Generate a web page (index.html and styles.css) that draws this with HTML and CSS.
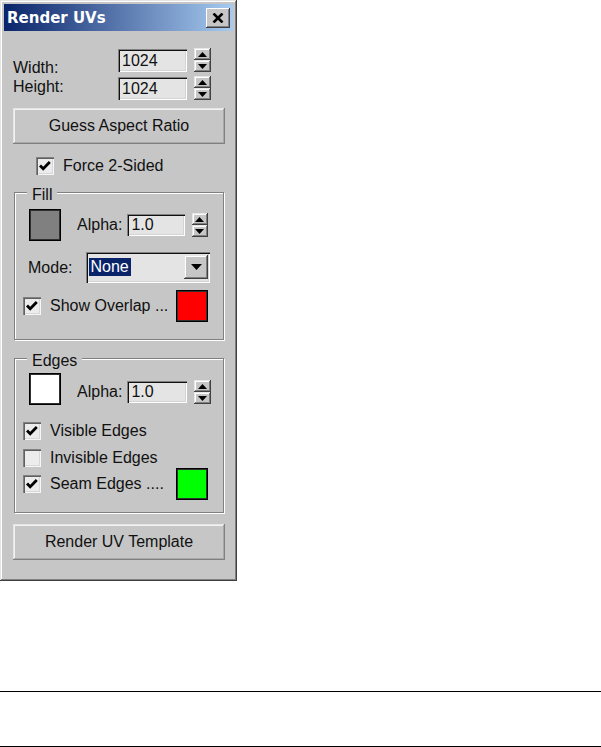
FILE: index.html
```html
<!DOCTYPE html>
<html>
<head>
<meta charset="utf-8">
<title>Render UVs</title>
<link rel="stylesheet" href="styles.css">
</head>
<body>
<div class="window">
  <div class="titlebar">
    <span class="title">Render UVs</span>
    <span class="close"><svg width="12" height="10" viewBox="0 0 12 10"><path d="M1.5 0.5 L10.5 9.5 M10.5 0.5 L1.5 9.5" stroke="#000" stroke-width="2.6"/></svg></span>
  </div>
  <div class="content">
    <div class="size">
      <div class="size-labels"><span>Width:</span><span>Height:</span></div>
      <div class="size-fields">
        <div class="spin-row">
          <div class="field field-size">1024</div>
          <div class="spinner">
            <span class="spin-btn"><svg width="9" height="5" viewBox="0 0 9 5"><polygon points="0,5 4.5,0 9,5" fill="#000"/></svg></span>
            <span class="spin-btn"><svg width="9" height="5" viewBox="0 0 9 5"><polygon points="0,0 9,0 4.5,5" fill="#000"/></svg></span>
          </div>
        </div>
        <div class="spin-row">
          <div class="field field-size">1024</div>
          <div class="spinner">
            <span class="spin-btn"><svg width="9" height="5" viewBox="0 0 9 5"><polygon points="0,5 4.5,0 9,5" fill="#000"/></svg></span>
            <span class="spin-btn"><svg width="9" height="5" viewBox="0 0 9 5"><polygon points="0,0 9,0 4.5,5" fill="#000"/></svg></span>
          </div>
        </div>
      </div>
    </div>

    <div class="btn btn-guess">Guess Aspect Ratio</div>

    <div class="check force">
      <span class="cb"><svg width="18" height="18" viewBox="0 0 18 18"><path d="M4 8.5 L7.2 11.8 L13.8 5" fill="none" stroke="#000" stroke-width="2.8"/></svg></span>
      <span>Force 2-Sided</span>
    </div>

    <div class="group group-fill">
      <span class="legend">Fill</span>
      <div class="alpha-row">
        <span class="swatch swatch-gray"></span>
        <span class="alpha-label">Alpha:</span>
        <div class="field field-alpha">1.0</div>
        <div class="spinner">
          <span class="spin-btn"><svg width="9" height="5" viewBox="0 0 9 5"><polygon points="0,5 4.5,0 9,5" fill="#000"/></svg></span>
          <span class="spin-btn"><svg width="9" height="5" viewBox="0 0 9 5"><polygon points="0,0 9,0 4.5,5" fill="#000"/></svg></span>
        </div>
      </div>
      <div class="mode-row">
        <span>Mode:</span>
        <div class="select">
          <span class="sel-text">None</span>
          <span class="sel-btn"><svg width="11" height="6" viewBox="0 0 11 6"><polygon points="0,0 11,0 5.5,6" fill="#000"/></svg></span>
        </div>
      </div>
      <div class="swatch-check-row overlap-row">
        <div class="check">
          <span class="cb"><svg width="18" height="18" viewBox="0 0 18 18"><path d="M4 8.5 L7.2 11.8 L13.8 5" fill="none" stroke="#000" stroke-width="2.8"/></svg></span>
          <span>Show Overlap ...</span>
        </div>
        <span class="swatch swatch-red"></span>
      </div>
    </div>

    <div class="group group-edges">
      <span class="legend">Edges</span>
      <div class="alpha-row">
        <span class="swatch swatch-white"></span>
        <div class="alpha-low">
          <span class="alpha-label">Alpha:</span>
          <div class="field field-alpha">1.0</div>
          <div class="spinner">
            <span class="spin-btn"><svg width="9" height="5" viewBox="0 0 9 5"><polygon points="0,5 4.5,0 9,5" fill="#000"/></svg></span>
            <span class="spin-btn"><svg width="9" height="5" viewBox="0 0 9 5"><polygon points="0,0 9,0 4.5,5" fill="#000"/></svg></span>
          </div>
        </div>
      </div>
      <div class="edge-checks">
        <div class="check">
          <span class="cb"><svg width="18" height="18" viewBox="0 0 18 18"><path d="M4 8.5 L7.2 11.8 L13.8 5" fill="none" stroke="#000" stroke-width="2.8"/></svg></span>
          <span>Visible Edges</span>
        </div>
        <div class="check">
          <span class="cb"></span>
          <span>Invisible Edges</span>
        </div>
        <div class="swatch-check-row seam-row">
          <div class="check">
            <span class="cb"><svg width="18" height="18" viewBox="0 0 18 18"><path d="M4 8.5 L7.2 11.8 L13.8 5" fill="none" stroke="#000" stroke-width="2.8"/></svg></span>
            <span>Seam Edges ....</span>
          </div>
          <span class="swatch swatch-green"></span>
        </div>
      </div>
    </div>

    <div class="btn btn-render">Render UV Template</div>
  </div>
</div>
<div class="rules"></div>
</body>
</html>
```

FILE: styles.css
```css
* { box-sizing: border-box; }
html, body { margin: 0; padding: 0; background: #fff; }
body {
  font-family: "Liberation Sans", Arial, sans-serif;
  font-size: 16px;
  color: #111;
}

.window {
  width: 237px;
  height: 581px;
  background: #c6c6c6;
  padding: 4px;
  box-shadow: inset -1px -1px 0 #404040, inset 1px 1px 0 #e4e4e4,
              inset -2px -2px 0 #808080, inset 2px 2px 0 #fff;
  display: flex;
  flex-direction: column;
}

.titlebar {
  height: 27px;
  display: flex;
  align-items: center;
  padding-left: 3px;
  padding-top: 1px;
  background: linear-gradient(to right, #0a246a, #a6caf0);
}
.title {
  font-family: "DejaVu Sans", Verdana, sans-serif;
  font-weight: bold;
  font-size: 15px;
  color: #fff;
}
.close {
  margin-left: auto;
  margin-right: 3px;
  width: 24px;
  height: 20px;
  background: #c6c6c6;
  display: flex;
  align-items: center;
  justify-content: center;
  box-shadow: inset -1px -1px 0 #404040, inset 1px 1px 0 #fff,
              inset -2px -2px 0 #808080;
}

.content { padding: 17px 8px 0 9px; }

/* raised / sunken helpers */
.spin-btn, .sel-btn {
  background: #c6c6c6;
  box-shadow: inset -1px -1px 0 #404040, inset 1px 1px 0 #e6e6e6,
              inset -2px -2px 0 #808080, inset 2px 2px 0 #fff;
}
.field, .select {
  background: #e4e4e4;
  box-shadow: inset 1px 1px 0 #808080, inset 2px 2px 0 #101010,
              inset -1px -1px 0 #fff, inset -2px -2px 0 #d4d4d4;
}

.size { display: flex; }
.size-labels {
  display: flex;
  flex-direction: column;
  padding-top: 10px;
  line-height: 19px;
}
.size-fields {
  margin-left: auto;
  margin-right: 14px;
  display: flex;
  flex-direction: column;
  gap: 4px;
}
.spin-row { display: flex; align-items: center; gap: 7px; }

.field {
  height: 23px;
  line-height: 23px;
  padding-left: 4px;
}
.field-size { width: 69px; }
.field-alpha { width: 60px; height: 22px; line-height: 22px; }

.spinner { display: flex; flex-direction: column; width: 17px; }
.spin-btn {
  height: 12px;
  display: flex;
  align-items: center;
  justify-content: center;
}

.btn {
  height: 36px;
  display: flex;
  align-items: center;
  justify-content: center;
  background: #c6c6c6;
  box-shadow: inset -1px -1px 0 #808080, inset 1px 1px 0 #e6e6e6,
              inset -2px -2px 0 #a8a8a8, inset 2px 2px 0 #f2f2f2;
}
.btn-guess { margin-top: 8px; }
.btn-render { margin-top: 11px; }

.check {
  display: flex;
  align-items: center;
  gap: 9px;
  height: 19px;
}
.cb {
  width: 18px;
  height: 18px;
  flex: none;
  background: #ececec;
  box-shadow: inset 1px 1px 0 #808080, inset 2px 2px 0 #606060,
              inset -1px -1px 0 #f6f6f6, inset -2px -2px 0 #d8d8d8;
}
.cb svg { display: block; }
.force { margin-top: 12px; padding-left: 23px; }

.group {
  position: relative;
  margin: 0 1px;
  border: 1px solid #808080;
  box-shadow: 1px 1px 0 #fff, inset 1px 1px 0 #fff;
  padding-left: 8px;
  padding-right: 15px;
}
.group-fill { margin-top: 17px; padding-top: 16px; padding-bottom: 17px; }
.group-edges { margin-top: 18px; padding-top: 14px; padding-bottom: 19px; }

.legend {
  position: absolute;
  top: -7px;
  left: 12px;
  padding: 0 5px;
  line-height: 18px;
  background: #c6c6c6;
}

.alpha-row {
  display: flex;
  align-items: center;
  padding-left: 6px;
}
.alpha-label { margin-left: 16px; }
.field-alpha { margin-left: 5px; }
.alpha-row .spinner { margin-left: 7px; }
.alpha-low {
  display: flex;
  align-items: center;
  margin-top: 6px;
}

.swatch {
  width: 32px;
  height: 32px;
  flex: none;
  border: 1px solid #000;
  box-shadow: inset 0 0 0 1px #303030;
}
.swatch-gray { background: #808080; }
.swatch-white { background: #fff; }
.swatch-red { background: #ff0000; }
.swatch-green { background: #00ff00; }

.mode-row {
  display: flex;
  align-items: center;
  margin-top: 11px;
  padding-left: 5px;
}
.select {
  width: 124px;
  height: 31px;
  margin-left: 14px;
  margin-right: -2px;
  display: flex;
  align-items: center;
  padding: 3px 2px 4px 3px;
}
.sel-text {
  background: #0a246a;
  color: #fff;
  line-height: 18px;
  padding: 0 2px 0 1px;
}
.sel-btn {
  margin-left: auto;
  width: 24px;
  height: 24px;
  display: flex;
  align-items: center;
  justify-content: center;
}

.swatch-check-row {
  display: flex;
  align-items: center;
  justify-content: space-between;
}
.overlap-row { margin-top: 7px; }

.edge-checks {
  display: flex;
  flex-direction: column;
  margin-top: 16px;
  gap: 8px;
}
.seam-row { height: 19px; margin-top: -1px; }

.rules {
  margin-top: 110px;
  height: 56px;
  border-top: 1px solid #000;
  border-bottom: 1px solid #000;
}
```
